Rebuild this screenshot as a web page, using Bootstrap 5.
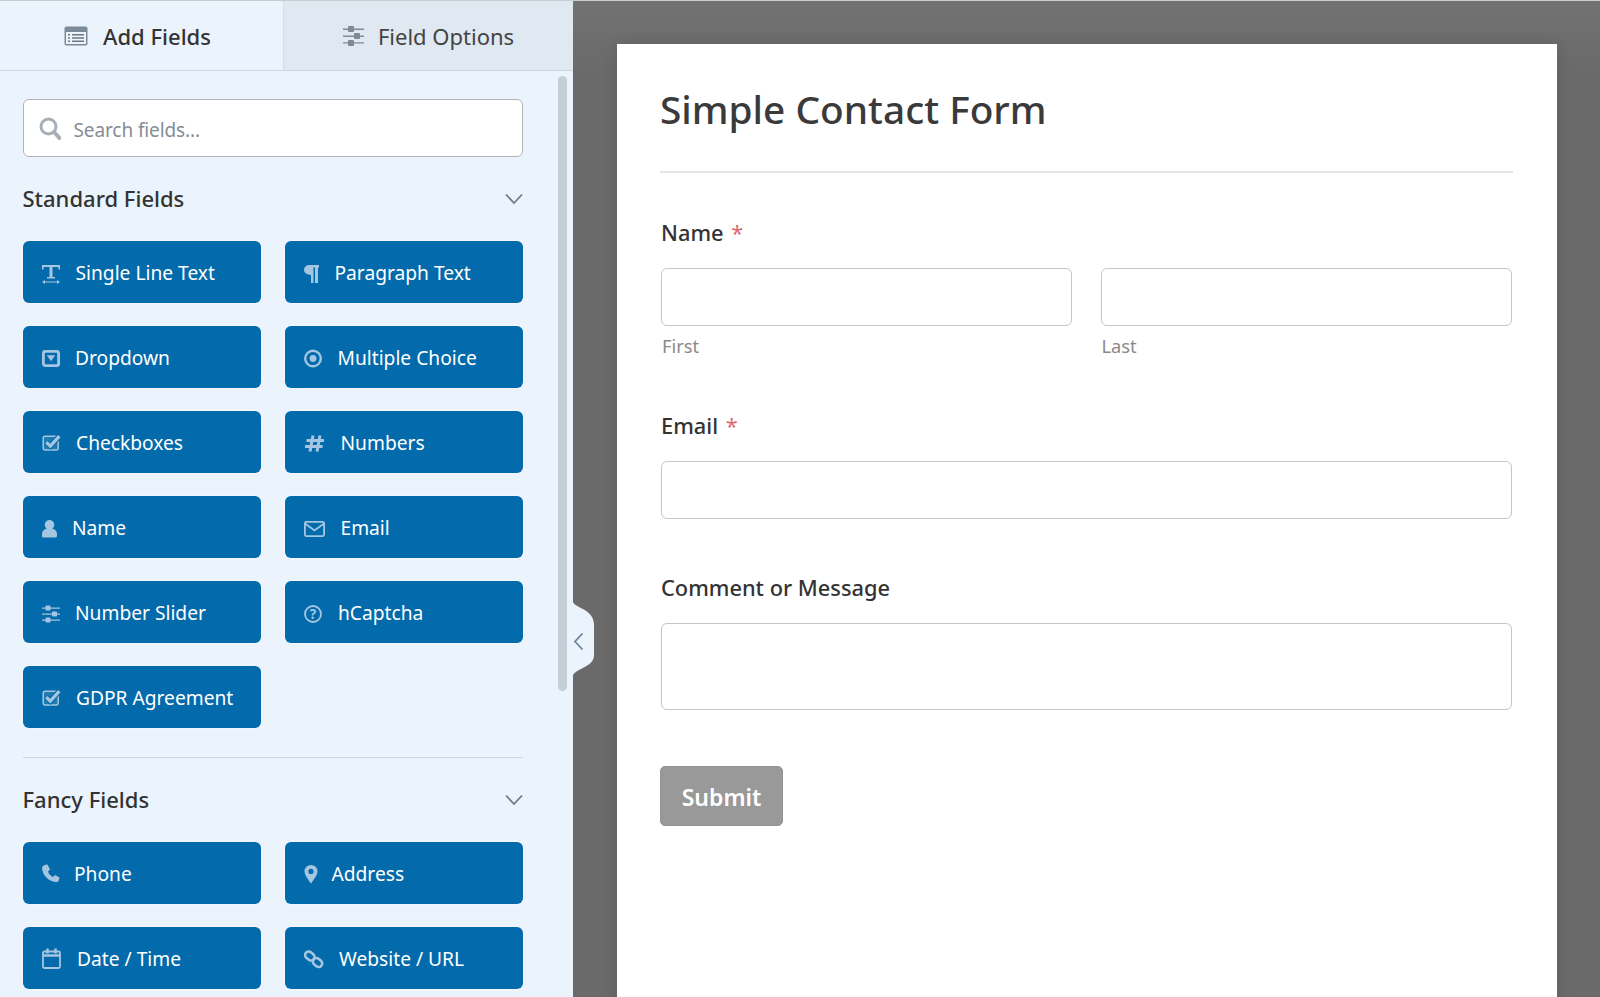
<!doctype html>
<html lang="en">
<head>
<meta charset="utf-8">
<title>Simple Contact Form</title>
<link href="https://cdn.jsdelivr.net/npm/bootstrap@5.3.0/dist/css/bootstrap.min.css" rel="stylesheet">
<style>
html,body{height:997px;overflow:hidden;margin:0}
body{font-family:"Noto Sans","Open Sans","Liberation Sans",sans-serif;background:#6c6c6c;color:#333}
.app{height:997px;border-top:1px solid #c9ccd0}
.side{width:573px;flex:none;background:#ebf3fc;overflow:hidden;height:996px}
.tabbar{height:70px;border-bottom:1px solid #ced6de}
.tab-a{width:284px;border-right:1px solid #d5dde5;background:#ebf3fc;font-size:22px;font-weight:500;color:#333;padding-right:8px;gap:15px}
.tab-b{flex:1;background:#e0e8f1;font-size:22px;color:#444;gap:14px}
.tab-a span,.tab-b span{padding-top:2px}
.side-body{padding:28px 50px 0 22.500px}
.find-box{height:58px;background:#fff;border:1px solid #b0b4b9;border-radius:6px;padding-left:15px;gap:13px;color:#848d96;font-size:19px;letter-spacing:-.1px}
.find-box span{padding-top:4px}
.sec-head{height:32px;margin:26px 0;font-size:22px;font-weight:500;color:#333}
.sec-head span{padding-bottom:2px}
.fld-grid{grid-template-columns:238.500px 238px;column-gap:23.500px;row-gap:23px}
.fld-btn{height:62px;padding:0 0 0 19px;background:#036aab;border:0;border-radius:6px;color:#fff;font-size:19.200px;text-align:left;box-shadow:0 0 0 1px rgba(255,255,255,.35)}
.fld-btn:hover{background:#036aab;color:#fff}
.fld-btn span{padding-top:2.500px}
.fld-btn svg{flex:none;color:#a4c6e0}
.sep{height:1px;background:#ced6de;margin:29px 0 26px}
.scroll-thumb{top:75px;left:558px;width:9px;height:615px;background:#c6ced6;border-radius:5px}
.handle{top:600px;left:572px}
.stage{flex:1;padding:43px 0 0 44px;background:linear-gradient(#727272,#6a6a6a 70px)}
.sheet{width:940px;height:960px;background:#fff;padding:41px 44.500px 0 43px;box-shadow:0 0 14px rgba(0,0,0,.12)}
.form-title{font-size:38.800px;line-height:48px;font-weight:500;color:#3a3a3a;margin:0;padding-bottom:38px;border-bottom:2px solid #e4e6e8}
.lbl{font-size:21.800px;line-height:30px;font-weight:500;color:#333;margin:0 0 20px;padding-left:1px;display:block}
.req{color:#dc6a6b;font-weight:400;margin-left:2px}
.entry.form-control{height:58px;border:1px solid #c4c6c8;border-radius:6px;box-shadow:none;background:#fff;resize:none}
.entry-tall.form-control{height:87px}
.two-col{display:grid;grid-template-columns:411px 411.500px;column-gap:28.500px;margin-left:1px}
.sub{font-size:18.300px;line-height:24px;color:#8a8a8a;margin-top:8px;padding-left:1px}
.block-name{margin-top:45px}
.block-mail{margin-top:53px}
.block-msg{margin-top:54px}
.send{margin-top:56px;width:123px;height:60px;padding:2px 0 0;background:#999;border:1px solid #939393;border-radius:5px;color:#fff;font-size:23px;font-weight:600}
.send:hover{background:#999;color:#fff}
.mail-in,.msg-in{margin-left:1px;width:851px}
</style>
</head>
<body>
<div class="app d-flex">
  <aside class="side position-relative">
    <div class="tabbar d-flex">
      <div class="tab-a d-flex align-items-center justify-content-center">
        <svg width="24" height="20" viewBox="0 0 24 20"><rect x=".5" y=".5" width="23" height="19" rx="2" fill="#7d8a97"/><rect x="2" y="6" width="20" height="12" fill="#eef3f8"/><path d="M4 8h2v1.500H4zM8 8h12v1.500H8zM4 11.300h2v1.500H4zM8 11.300h12v1.500H8zM4 14.600h2v1.500H4zM8 14.600h12v1.500H8z" fill="#6a7886"/></svg>
        <span>Add Fields</span>
      </div>
      <div class="tab-b d-flex align-items-center justify-content-center">
        <svg width="21" height="20" viewBox="0 0 21 20" fill="#7d8a97"><path d="M0 2.500h21v1.400H0zM0 9.500h21v1.400H0zM0 16.200h21v1.400H0z"/><rect x="5" y="0" width="6" height="6" rx="1"/><rect x="11" y="7" width="6" height="6" rx="1"/><rect x="5" y="14" width="6" height="6" rx="1"/></svg>
        <span>Field Options</span>
      </div>
    </div>
    <div class="side-body">
      <div class="find-box d-flex align-items-center">
        <svg width="22" height="23" viewBox="0 0 22 23" fill="none" stroke="#a7aeb5"><circle cx="9.500" cy="9.500" r="7.500" stroke-width="3"/><path d="M15 15l5.500 6" stroke-width="4" stroke-linecap="round"/></svg>
        <span>Search fields...</span>
      </div>
      <div class="sec-head d-flex align-items-center justify-content-between"><span>Standard Fields</span>
        <svg width="18" height="12" viewBox="0 0 18 12" fill="none" stroke="#6f7b85" stroke-width="1.800"><path d="M1 1.500l8 8.500 8-8.500"/></svg></div>
      <div class="d-grid fld-grid">
        <button class="fld-btn btn d-flex align-items-center"><svg width="34" height="24" viewBox="0 0 34 24" fill="currentColor"><path d="M0 5h18v4.500h-1.200L16 7h-5.500v10H13v1.500H5V17h2.500V7H2L1.200 9.500H0z"/><path d="M0 22l3-2v1.400h12V20l3 2-3 2v-1.400H3V24z"/></svg><span>Single Line Text</span></button>
        <button class="fld-btn btn d-flex align-items-center"><svg width="31" height="24" viewBox="0 0 31 24" fill="currentColor"><path d="M5.500 5H15v2.500h-1V23h-3V7.500H9.500V23H7v-8.200C3 14.800 0 13 0 10s2.500-5 5.500-5z"/></svg><span>Paragraph Text</span></button>

        <button class="fld-btn btn d-flex align-items-center"><svg width="33.500" height="24" viewBox="0 0 33.500 24" fill="none"><rect x="1.400" y="6.400" width="15.200" height="14.200" rx="1.800" stroke="currentColor" stroke-width="2.800" fill="#036aab"/><path d="M4.800 10.300h8.400L9 16.300z" fill="currentColor"/></svg><span>Dropdown</span></button>
        <button class="fld-btn btn d-flex align-items-center"><svg width="34" height="24" viewBox="0 0 34 24" fill="currentColor"><circle cx="9" cy="13.500" r="7.800" fill="none" stroke="currentColor" stroke-width="2.400"/><circle cx="9" cy="13.500" r="3.400"/></svg><span>Multiple Choice</span></button>

        <button class="fld-btn btn d-flex align-items-center"><svg width="34.500" height="24" viewBox="0 0 34.500 24" fill="none" stroke="currentColor"><rect x="1.200" y="6.200" width="15" height="13.800" rx="2" stroke-width="1.500" fill="rgba(164,198,224,.18)"/><path d="M4.300 12.300l4 3.800 9-10" stroke="#036aab" stroke-width="5.500"/><path d="M4.300 12.300l4 3.800 9-10" stroke-width="3.300"/></svg><span>Checkboxes</span></button>
        <button class="fld-btn btn d-flex align-items-center"><svg width="37" height="24" viewBox="0 0 37 24" fill="none" stroke="currentColor" stroke-width="3"><path d="M9 5.500L6 21.500M16 5.500L13 21.500M2.500 10.500h17.500M1 16.500h17.500"/></svg><span>Numbers</span></button>

        <button class="fld-btn btn d-flex align-items-center"><svg width="30.500" height="24" viewBox="0 0 30.500 24" fill="currentColor"><circle cx="7.500" cy="9.800" r="4.800"/><path d="M0 19c0-3 2.500-5 4.500-5h6c2 0 4.500 2 4.500 5v2a1.500 1.500 0 0 1-1.500 1.500h-12A1.500 1.500 0 0 1 0 21z"/></svg><span>Name</span></button>
        <button class="fld-btn btn d-flex align-items-center"><svg width="37" height="24" viewBox="0 0 37 24" fill="none" stroke="currentColor" stroke-width="1.800"><rect x=".9" y="6.900" width="19.200" height="14.200" rx="1.500"/><path d="M1 8.500l9.500 7 9.500-7"/></svg><span>Email</span></button>

        <button class="fld-btn btn d-flex align-items-center"><svg width="33.500" height="24" viewBox="0 0 33.500 24" fill="currentColor"><path d="M0 7.500h18v1.200H0zM0 13.500h18v1.200H0zM0 19.500h18v1.200H0z"/><rect x="3.500" y="5.600" width="5" height="5" rx=".8"/><rect x="10" y="11.600" width="5" height="5" rx=".8"/><rect x="3.500" y="17.600" width="5" height="5" rx=".8"/></svg><span>Number Slider</span></button>
        <button class="fld-btn btn d-flex align-items-center"><svg width="34.500" height="24" viewBox="0 0 34.500 24"><circle cx="9" cy="14" r="8" fill="none" stroke="currentColor" stroke-width="1.800"/><text x="9" y="19" text-anchor="middle" font-size="13.500" font-weight="700" fill="currentColor" font-family="Noto Sans,sans-serif">?</text></svg><span>hCaptcha</span></button>

        <button class="fld-btn btn d-flex align-items-center"><svg width="34.500" height="24" viewBox="0 0 34.500 24" fill="none" stroke="currentColor"><rect x="1.200" y="6.200" width="15" height="13.800" rx="2" stroke-width="1.500" fill="rgba(164,198,224,.18)"/><path d="M4.300 12.300l4 3.800 9-10" stroke="#036aab" stroke-width="5.500"/><path d="M4.300 12.300l4 3.800 9-10" stroke-width="3.300"/></svg><span>GDPR Agreement</span></button>
      </div>
      <div class="sep"></div>
      <div class="sec-head d-flex align-items-center justify-content-between"><span>Fancy Fields</span>
        <svg width="18" height="12" viewBox="0 0 18 12" fill="none" stroke="#6f7b85" stroke-width="1.800"><path d="M1 1.500l8 8.500 8-8.500"/></svg></div>
      <div class="d-grid fld-grid">
        <button class="fld-btn btn d-flex align-items-center"><svg width="32.500" height="24" viewBox="0 0 32.500 24" fill="currentColor"><path d="M2.500 4l3-.5L8 8.500l-2 2c.8 2.500 2.500 4.500 5 5.500l2-2 4.500 2.500-.8 3c-.4 1-1.200 1.500-2.200 1.500C7 21 0 14 0 6.500 .8 5 1.500 4.500 2.500 4z"/></svg><span>Phone</span></button>
        <button class="fld-btn btn d-flex align-items-center"><svg width="28" height="24" viewBox="0 0 28 24"><path fill="currentColor" fill-rule="evenodd" d="M7 4C10.500 4 13.500 6.800 13.500 10.200 13.500 14 9.500 19 7 22.500 4.500 19 .5 14 .5 10.200 .5 6.800 3.500 4 7 4zm0 3.800a2.600 2.600 0 1 0 0 5.200 2.600 2.600 0 0 0 0-5.200z"/></svg><span>Address</span></button>

        <button class="fld-btn btn d-flex align-items-center"><svg width="35.500" height="24" viewBox="0 0 35.500 24" fill="none" stroke="currentColor"><rect x="1" y="5.500" width="17" height="16.500" rx="1.500" stroke-width="1.800"/><path d="M1 9.500h17" stroke-width="2.500"/><path d="M5.500 2.500v5M13.500 2.500v5" stroke-width="2.600"/></svg><span>Date / Time</span></button>
        <button class="fld-btn btn d-flex align-items-center"><svg width="35.500" height="24" viewBox="0 0 35.500 24" fill="none" stroke="currentColor" stroke-width="2.600"><rect x=".8" y="6.500" width="10" height="7" rx="3.400" transform="rotate(40 5.800 10)"/><rect x="8.500" y="13" width="10" height="7" rx="3.400" transform="rotate(40 13.500 16.500)"/></svg><span>Website / URL</span></button>
      </div>
    </div>
    <div class="scroll-thumb position-absolute"></div>
  </aside>
  <main class="stage">
    <div class="sheet">
      <h1 class="form-title">Simple Contact Form</h1>
      <div class="block-name">
        <label class="lbl">Name <span class="req">*</span></label>
        <div class="two-col">
          <div><input class="entry form-control" type="text"><div class="sub">First</div></div>
          <div><input class="entry form-control" type="text"><div class="sub">Last</div></div>
        </div>
      </div>
      <div class="block-mail">
        <label class="lbl">Email <span class="req">*</span></label>
        <input class="entry mail-in form-control" type="email">
      </div>
      <div class="block-msg">
        <label class="lbl">Comment or Message</label>
        <textarea class="entry entry-tall msg-in form-control"></textarea>
      </div>
      <button class="send btn" type="button">Submit</button>
    </div>
  </main>
</div>
<svg class="handle position-absolute" width="24" height="80" viewBox="0 0 24 80"><path d="M0 0c1 3 3 5 7 7 8 4 15 8 15 18v30c0 8-7 11-15 15-4 2-6 4-7 7v3z" fill="#ebf3fc"/><path d="M10.500 33.500l-7.500 8 7.500 8" fill="none" stroke="#6f8499" stroke-width="1.800"/></svg>
<script src="https://cdn.jsdelivr.net/npm/bootstrap@5.3.0/dist/js/bootstrap.bundle.min.js"></script>
</body>
</html>
